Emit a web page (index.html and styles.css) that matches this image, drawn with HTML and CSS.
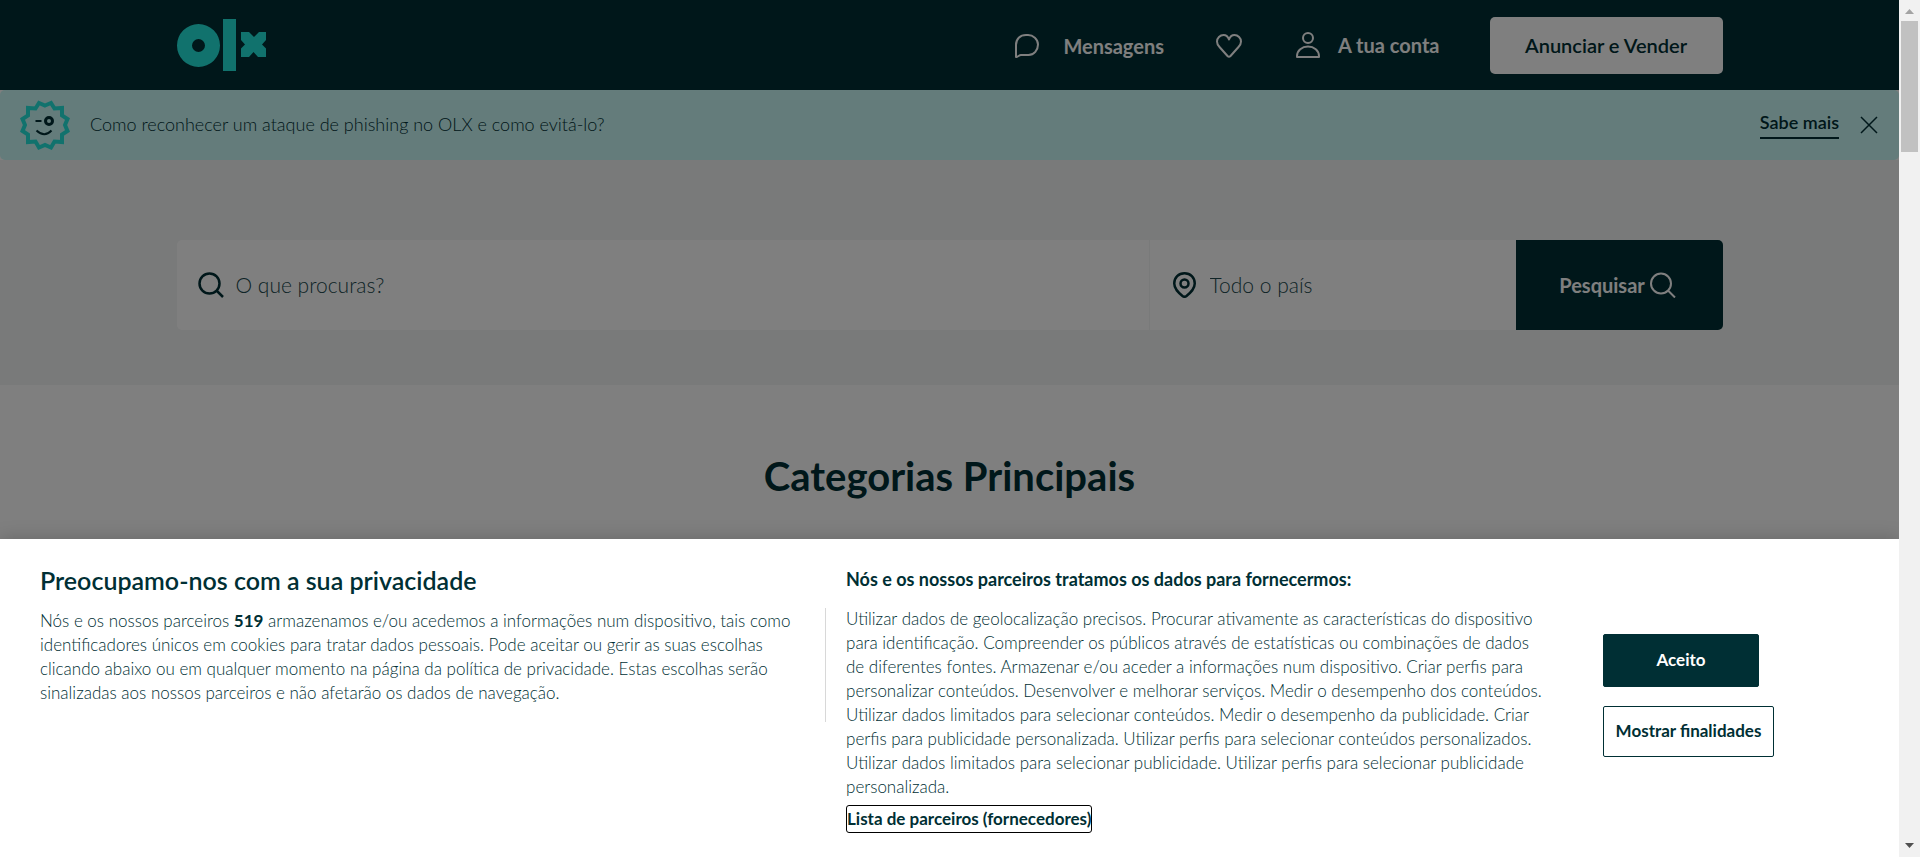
FILE: index.html
```html
<!DOCTYPE html>
<html lang="pt">
<head>
<meta charset="utf-8">
<title>OLX Portugal</title>
<link rel="stylesheet" href="styles.css">
</head>
<body>
<div class="window">
  <div class="page">
    <header class="header">
      <div class="container header-row">
        <a class="logo" href="#" aria-label="OLX">
          <svg width="90" height="53" viewBox="0 0 90 53" fill="#23e5db"><path fill-rule="evenodd" d="M21.500 5a21.500 21.500 0 1 0 0 43a21.500 21.500 0 1 0 0-43zM21.500 20a6.500 6.500 0 1 1 0 13a6.500 6.500 0 1 1 0-13z"/><path d="M46 0h13v52H46z"/><path d="M64 13h8l5 5 5-5h7v8l-4 4.500 4 4v8.500h-8l-4.500-5-4.500 5h-8v-8.500l4-4-4-4.500z"/></svg>
        </a>
        <nav class="nav">
          <a class="nav-item messages" href="#">
            <svg width="24" height="24" viewBox="0 0 24 24" fill="none" stroke="#fff" stroke-width="2" stroke-linejoin="round"><path d="M1 23V11C1 5 5 1 11 1h2c5 0 10 4 10 9.500S19 21 13.500 21H6c-2 0-3 2-5 2z"/></svg>
            <span>Mensagens</span>
          </a>
          <a class="nav-item heart" href="#" aria-label="Favoritos">
            <svg width="26" height="24" viewBox="0 0 26 24" fill="none" stroke="#fff" stroke-width="2" stroke-linejoin="round"><path d="M13 5.500C12 2.500 10 1 7.500 1 4 1 1 4 1 7.500c0 2.500 1 4 2.500 5.500L11.500 22q1.500 1.500 3 0L22.500 13C24 11.500 25 10 25 7.500 25 4 22 1 18.500 1 16 1 14 2.500 13 5.500z"/></svg>
          </a>
          <a class="nav-item account" href="#">
            <svg width="24" height="26" viewBox="0 0 24 26" fill="none" stroke="#fff" stroke-width="2" stroke-linejoin="round"><circle cx="12" cy="6" r="5"/><path d="M1 25v-1c0-5.500 5-9.500 11-9.500s11 4 11 9.500v1z"/></svg>
            <span>A tua conta</span>
          </a>
          <button class="sell" type="button">Anunciar e Vender</button>
        </nav>
      </div>
    </header>
    <div class="banner">
      <svg class="badge" width="50" height="50" viewBox="0 0 50 50" fill="none"><path stroke="#23e5db" stroke-width="4" d="M25 5.500 31 3 34.500 8.500 42 8 42 15.500 47.500 19 45 25 47.500 31 42 34.500 42 42 34.500 41.500 31 47.500 25 45 19 47.500 15.500 41.500 8 42 8 34.500 2.500 31 5 25 2.500 19 8 15.500 8 8 15.500 8.500 19 3z"/><path stroke="#002f34" stroke-width="2" d="M15.500 21h6M16.500 30.500q8 7.500 15 0"/><circle cx="29" cy="21" r="3.500" stroke="#002f34" stroke-width="3"/></svg>
      <p class="banner-text">Como reconhecer um ataque de phishing no OLX e como evitá-lo?</p>
      <a class="more" href="#">Sabe mais</a>
      <button class="close" type="button" aria-label="Fechar"><svg width="18" height="18" viewBox="0 0 18 18" stroke="#002f34" stroke-width="1.500"><path d="M1 1l16 16M17 1L1 17"/></svg></button>
    </div>
    <section class="hero">
      <form class="container search">
        <label class="field query">
          <svg width="26" height="26" viewBox="0 0 26 26" fill="none" stroke="#002f34" stroke-width="2.500"><circle cx="11.500" cy="11.500" r="10"/><path d="M18.500 18.500l6.500 6.500"/></svg>
          <input type="text" placeholder="O que procuras?" aria-label="O que procuras?">
        </label>
        <label class="field place">
          <svg width="23" height="26" viewBox="0 0 23 26" fill="none" stroke="#002f34" stroke-width="2.500" stroke-linejoin="round"><path d="M11.500 1.250C5.500 1.250 1.250 5.500 1.250 11.500c0 5.500 4 9 8.250 12.500q2 1.500 4 0c4.250-3.500 8.250-7 8.250-12.500 0-6-4.250-10.250-10.250-10.250z"/><circle cx="11.500" cy="11.500" r="4"/></svg>
          <input type="text" placeholder="Todo o país" aria-label="Todo o país">
        </label>
        <button class="submit" type="submit">Pesquisar <svg width="26" height="26" viewBox="0 0 26 26" fill="none" stroke="#fff" stroke-width="2"><circle cx="11" cy="11.500" r="10"/><path d="M18 18.500l7 7"/></svg></button>
      </form>
    </section>
    <h1 class="title">Categorias Principais</h1>
    <div class="shade"></div>
    <section class="consent" role="dialog" aria-labelledby="privacy-title">
      <div class="policy">
        <h2 id="privacy-title">Preocupamo-nos com a sua privacidade</h2>
        <p>Nós e os nossos parceiros <b>519</b> armazenamos e/ou acedemos a informações num dispositivo, tais como<br>identificadores únicos em cookies para tratar dados pessoais. Pode aceitar ou gerir as suas escolhas<br>clicando abaixo ou em qualquer momento na página da política de privacidade. Estas escolhas serão<br>sinalizadas aos nossos parceiros e não afetarão os dados de navegação.</p>
      </div>
      <div class="rule"></div>
      <div class="purposes">
        <h3>Nós e os nossos parceiros tratamos os dados para fornecermos:</h3>
        <p>Utilizar dados de geolocalização precisos. Procurar ativamente as características do dispositivo<br>para identificação. Compreender os públicos através de estatísticas ou combinações de dados<br>de diferentes fontes. Armazenar e/ou aceder a informações num dispositivo. Criar perfis para<br>personalizar conteúdos. Desenvolver e melhorar serviços. Medir o desempenho dos conteúdos.<br>Utilizar dados limitados para selecionar conteúdos. Medir o desempenho da publicidade. Criar<br>perfis para publicidade personalizada. Utilizar perfis para selecionar conteúdos personalizados.<br>Utilizar dados limitados para selecionar publicidade. Utilizar perfis para selecionar publicidade<br>personalizada.</p>
        <button class="vendors" type="button">Lista de parceiros (fornecedores)</button>
      </div>
      <div class="actions">
        <button class="accept" type="button">Aceito</button>
        <button class="manage" type="button">Mostrar finalidades</button>
      </div>
    </section>
  </div>
  <div class="scrollbar" aria-hidden="true">
    <svg width="9" height="5" viewBox="0 0 9 5"><path d="M4.500 0L9 5H0z" fill="#a3a3a3"/></svg>
    <div class="thumb"></div>
    <svg width="9" height="5" viewBox="0 0 9 5"><path d="M0 0h9L4.500 5z" fill="#505050"/></svg>
  </div>
</div>
</body>
</html>
```
FILE: styles.css
```css
* { box-sizing: border-box; }
body { margin: 0; font-family: Lato, "Open Sans", sans-serif; color: #002f34; }
h1, h2, h3, p { margin: 0; }
b { font-weight: 700; }
a { color: inherit; text-decoration: none; }
button, input { font: inherit; color: inherit; padding: 0; border: 0; }
svg { display: block; flex: none; }

.window { display: flex; height: 100vh; overflow: hidden; }
.page { position: relative; flex: 1; min-width: 0; overflow: hidden; background: #fff; }
.container { width: 1546px; max-width: 100%; margin: 0 auto; }

.header { background: #002f34; color: #fff; }
.header-row { display: flex; align-items: center; justify-content: space-between; height: 90px; }
.nav { display: flex; align-items: center; font-size: 20px; font-weight: 700; line-height: 24px; }
.nav-item { display: flex; align-items: center; padding-top: 2px; }
.messages { gap: 24px; margin-right: 52px; }
.heart { margin-right: 54px; }
.account { gap: 18px; margin-right: 50px; padding-top: 0; }
.sell { width: 233px; height: 57px; border-radius: 5px; background: #fff; color: #002f34; font-weight: 600; }

.banner { display: flex; align-items: center; height: 70px; padding: 0 21px 0 20px; border-radius: 5px; background: #c8f8f6; }
.banner-text { flex: 1; margin-left: 20px; padding-bottom: 2px; font-size: 18px; font-weight: 300; line-height: 24px; }
.more { margin-right: 21px; padding-bottom: 4px; border-bottom: 2px solid #002f34; font-size: 18px; font-weight: 600; line-height: 22px; }
.close { background: none; }

.hero { padding: 80px 0 55px; background: #f2f4f5; }
.search { display: flex; }
.field { display: flex; align-items: center; height: 90px; background: #fff; }
.field input { flex: 1; min-width: 0; background: none; font-size: 21px; font-weight: 300; line-height: 24px; }
.field input::placeholder { color: #20484d; opacity: 1; }
.query { flex: 1; gap: 12px; padding: 0 21px; border-right: 1px solid #f2f4f5; border-radius: 5px 0 0 5px; }
.place { width: 366px; gap: 14px; padding: 0 23px; }
.submit { display: flex; align-items: center; justify-content: center; gap: 5px; width: 207px; padding-right: 3px; border-radius: 0 5px 5px 0; background: #002f34; color: #fff; font-size: 20px; font-weight: 700; }

.title { padding-top: 66px; font-size: 40px; font-weight: 700; line-height: 50px; text-align: center; }

.shade { position: absolute; inset: 0; background: rgba(0, 0, 0, 0.5); }
.consent { position: absolute; left: 0; right: 0; bottom: 0; display: flex; align-items: flex-start; padding: 26px 40px 24px; background: #fff; box-shadow: 0 0 18px rgba(0, 0, 0, 0.2); }
.consent p { font-size: 17px; font-weight: 300; line-height: 24px; white-space: nowrap; }
.policy { width: 785px; }
.policy h2 { margin-bottom: 14px; font-size: 25px; font-weight: 600; line-height: 30px; }
.rule { width: 1px; height: 114px; margin: 43px 20px 0 0; background: #d8d8d8; }
.purposes { width: 757px; }
.purposes h3 { margin-bottom: 14px; font-size: 18px; font-weight: 700; line-height: 28px; }
.vendors { margin-top: 6px; height: 28px; border: 1px solid #000; border-radius: 3px; background: none; font-size: 17px; font-weight: 700; line-height: 24px; }
.actions { display: flex; flex-direction: column; align-items: flex-start; gap: 19px; padding-top: 69px; }
.actions button { padding-bottom: 2px; border: 1px solid #002f34; border-radius: 2px; font-size: 17px; font-weight: 700; line-height: 24px; }
.accept { width: 156px; height: 53px; background: #002f34; color: #fff; }
.manage { width: 171px; height: 51px; background: #fff; }

.scrollbar { display: flex; flex-direction: column; align-items: center; width: 21px; padding: 9px 2px; background: #f1f1f1; }
.thumb { width: 17px; height: 131px; margin: 7px 0 auto; background: #c1c1c1; }
```
